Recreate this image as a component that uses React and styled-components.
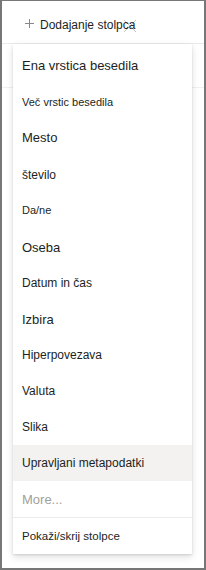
import React from "react";
import styled, { createGlobalStyle } from "styled-components";

const Global = createGlobalStyle`
  html, body { margin: 0; padding: 0; background: #ffffff; }
  body { font-family: "Liberation Sans", Arial, sans-serif; color: #323130; }
  * { box-sizing: border-box; }
`;

const Frame = styled.div`
  position: relative;
  width: 206px;
  height: 570px;
  border-style: solid;
  border-color: #777777;
  border-width: 1px 2px 2px 2px;
  background: #ffffff;
  overflow: hidden;
`;

const HeaderBar = styled.div`
  position: relative;
  display: flex;
  align-items: flex-start;
  gap: 6px;
  height: 43px;
  padding: 16px 0 0 23px;
  border-bottom: 1px solid #ebe9e7;
`;

const PlusIcon = styled.svg`
  width: 9px;
  height: 9px;
  margin-top: 2px;
  flex: none;
`;

const HeaderLabel = styled.span`
  position: relative;
  z-index: 1;
  font-size: 12px;
  line-height: 16px;
  color: #201f1e;
  white-space: nowrap;
`;

const GhostIcon = styled.svg`
  position: absolute;
  left: 121px;
  top: 18px;
  width: 14px;
  height: 14px;
  z-index: 0;
`;

const TableRow = styled.div`
  height: 44px;
  border-bottom: 1px solid #f1f0ef;
`;

const Menu = styled.div`
  position: absolute;
  left: 11px;
  top: 43px;
  width: 179px;
  padding-top: 5px;
  background: #ffffff;
  box-shadow: 0 3.2px 7.2px rgba(0, 0, 0, 0.132), 0 0.6px 1.8px rgba(0, 0, 0, 0.108);
  z-index: 2;
`;

const Item = styled.div`
  display: flex;
  align-items: center;
  height: 36px;
  padding-left: 9px;
  padding-bottom: ${(p) => (p.$lift ? 3 : 0)}px;
  font-size: ${(p) => p.$size}px;
  color: ${(p) => (p.$muted ? "#a19f9d" : "#201f1e")};
  background: ${(p) => (p.$active ? "#f3f2f1" : "transparent")};
  white-space: nowrap;
`;

const Divider = styled.div`
  height: 1px;
  background: #edebe9;
`;

const items = [
  ["Ena vrstica besedila", 13, false, true],
  ["Več vrstic besedila", 11, false, true],
  ["Mesto", 13, false, true],
  ["število", 12],
  ["Da/ne", 11, false, true],
  ["Oseba", 13],
  ["Datum in čas", 12],
  ["Izbira", 13],
  ["Hiperpovezava", 12],
  ["Valuta", 12],
  ["Slika", 12],
  ["Upravljani metapodatki", 12, true],
];

export default function App() {
  return (
    <Frame>
      <Global />
      <HeaderBar>
        <PlusIcon viewBox="0 0 9 9">
          <path d="M4.5 0 V9 M0 4.5 H9" stroke="#8a8886" strokeWidth="1" fill="none" />
        </PlusIcon>
        <HeaderLabel>Dodajanje stolpca</HeaderLabel>
        <GhostIcon viewBox="0 0 14 14">
          <path d="M1 1 L13 13 M13 1 L1 13" stroke="#c8c6c4" strokeWidth="1" fill="none" />
        </GhostIcon>
      </HeaderBar>
      <TableRow />
      <Menu>
        {items.map(([label, size, active, lift]) => (
          <Item key={label} $size={size} $active={active} $lift={lift}>
            {label}
          </Item>
        ))}
        <Item $size={13} $muted>
          More...
        </Item>
        <Divider />
        <Item $size={11.5}>Pokaži/skrij stolpce</Item>
      </Menu>
    </Frame>
  );
}
